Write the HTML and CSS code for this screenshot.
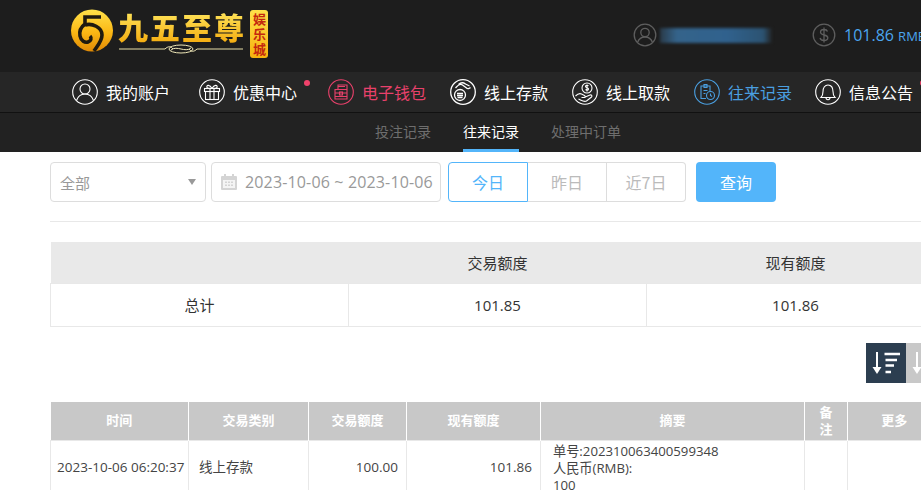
FILE: index.html
```html
<!DOCTYPE html>
<html lang="zh-CN">
<head>
<meta charset="utf-8">
<title>往来记录</title>
<link rel="stylesheet" href="styles.css">
</head>
<body>
<header class="top">
  <div class="logo">
    <svg class="logo-mark" width="44" height="44" viewBox="0 0 44 44">
      <defs>
        <linearGradient id="gold" x1="0" y1="0" x2="0" y2="1">
          <stop offset="0" stop-color="#ffe14a"/><stop offset=".55" stop-color="#fbb714"/><stop offset="1" stop-color="#e08a06"/>
        </linearGradient>
      </defs>
      <circle cx="22" cy="21.500" r="21" fill="url(#gold)"/>
      <path d="M31 8H15V15C11 18 9 22 10 27 11 32 15 34 18 33 21 32 22 29 20 27" fill="none" stroke="#1f1a10" stroke-width="3.600"/>
      <path d="M15 16C22 14 32 18 32 26 32 32 28 36 24 42" fill="none" stroke="#1f1a10" stroke-width="3.600"/>
    </svg>
    <div class="logo-words">
      <div class="logo-title">九五至尊</div>
      <svg class="logo-orn" width="124" height="10" viewBox="0 0 124 10">
        <path d="M0 5H46M78 5H124" stroke="#e8dfa8" stroke-width="1"/>
        <path d="M46 5c3-3 6-3 8 0M78 5c-3 3-6 3-8 0" stroke="#f0e8b8" fill="none"/>
        <ellipse cx="62" cy="5" rx="12" ry="4" fill="none" stroke="#f0e8b8"/>
        <path d="M52 6c6-5 14 3 20-2" stroke="#f0e8b8" fill="none"/>
      </svg>
    </div>
    <div class="logo-badge">娱乐城</div>
  </div>
  <div class="account">
    <svg class="acc-icon" width="24" height="24" viewBox="0 0 24 24" fill="none" stroke="#5e5e5e" stroke-width="1.300">
      <circle cx="12" cy="12" r="10.800"/><circle cx="12" cy="9.500" r="4.200"/><path d="M4.500 19.500c1.500-4 4-5.500 7.500-5.500s6 1.500 7.500 5.500"/>
    </svg>
    <div class="acc-name"></div>
    <svg class="acc-icon" width="24" height="24" viewBox="0 0 24 24" fill="none" stroke="#5e5e5e" stroke-width="1.300">
      <circle cx="12" cy="12" r="10.800"/><path d="M15.500 8.500c-.5-1.500-2-2-3.500-2-2 0-3.500 1-3.500 2.700 0 3.800 7.300 1.800 7.300 5.600 0 1.700-1.700 2.700-3.800 2.700-2 0-3.500-.8-4-2.500M12 4.500v15"/>
    </svg>
    <div class="balance">101.86 <small>RMB</small></div>
  </div>
</header>

<nav class="nav">
  <a class="nav-item nav-item-a">
    <svg class="nav-icon" viewBox="0 0 26 26"><circle cx="13" cy="13" r="12.300"/><circle cx="13" cy="10" r="5"/><path d="M4.500 21.500c1.500-4.500 4.500-6.500 8.500-6.500s7 2 8.500 6.500"/></svg>
    <span>我的账户</span>
  </a>
  <a class="nav-item nav-item-b">
    <svg class="nav-icon" viewBox="0 0 26 26"><circle cx="13" cy="13" r="12.300"/><rect x="5.500" y="9.500" width="15" height="3"/><rect x="6.500" y="12.500" width="13" height="8"/><path d="M11 9.500v11M15 9.500v11M13 9.500c-2-4-6-4-5-1 .3 1 3 1 5 1 2 0 4.700 0 5-1 1-3-3-3-5 1"/></svg>
    <span>优惠中心</span>
    <i class="dot"></i>
  </a>
  <a class="nav-item nav-item-pink">
    <svg class="nav-icon" viewBox="0 0 26 26"><circle cx="13" cy="13" r="12.300"/><path d="M10 10V6h9v14H7v-9.500h12"/><path d="M7 14h12M7 17.500h12M10 7.500h7"/><rect x="11.500" y="13" width="3" height="3"/></svg>
    <span>电子钱包</span>
  </a>
  <a class="nav-item">
    <svg class="nav-icon nav-icon-bold" viewBox="0 0 26 26"><circle cx="13" cy="13" r="12.300"/><circle cx="10" cy="16" r="5.500"/><path d="M7 14.500h6M7 16.500h6M7.500 18.500h5M5.500 9c3-3.500 5-4.500 7-3l4 3c1 1 3 .5 4-.5M8.500 5.500c2-2 5-2 7-.5l4 2"/></svg>
    <span>线上存款</span>
  </a>
  <a class="nav-item">
    <svg class="nav-icon" viewBox="0 0 26 26"><circle cx="13" cy="13" r="12.300"/><circle cx="15" cy="9" r="5"/><path d="M15 5.500v7M13.500 10.500c1 1 3 .8 3-.5s-3-1-3-2.500 2-1.500 3-.6M3.500 17c2-2 4-3 6-2l3 1.500c1 .5 1 2 0 2h-3M12 18.500l6-2.500c1.500-.5 2.500 1 1.500 2l-5 4c-2 1-4 0-6-1l-2-1"/></svg>
    <span>线上取款</span>
  </a>
  <a class="nav-item nav-item-blue">
    <svg class="nav-icon" viewBox="0 0 26 26"><circle cx="13" cy="13" r="12.300"/><path d="M12 19.500H7V7h9v5M10 5.500h3v3h-3zM9.500 11.500h4M9.500 14.500h2"/><circle cx="16.500" cy="16.500" r="4"/><path d="M16.500 14.500v2l1.500 1"/></svg>
    <span>往来记录</span>
  </a>
  <a class="nav-item">
    <svg class="nav-icon" viewBox="0 0 26 26"><circle cx="13" cy="13" r="12.300"/><path d="M6 18.500h14c-1.500-1.500-2-3-2-6 0-4-2-6.500-5-6.500s-5 2.500-5 6.500c0 3-.5 4.500-2 6z"/><path d="M11 18.500c0 3 4 3 4 0"/></svg>
    <span>信息公告</span>
    <i class="dot"></i>
  </a>
</nav>

<div class="subnav">
  <a class="sub-item">投注记录</a>
  <a class="sub-item sub-item-on">往来记录</a>
  <a class="sub-item">处理中订单</a>
</div>

<main class="content">
  <form class="filters">
    <div class="field field-select"><span>全部</span><i class="caret"></i></div>
    <div class="field field-date">
      <svg width="18" height="18" viewBox="0 0 18 18" fill="#d4d4d4">
        <rect x="1" y="3" width="16" height="14" rx="1"/><rect x="4" y="1" width="2" height="4"/><rect x="12" y="1" width="2" height="4"/>
        <path d="M3 7h12v8H3z" fill="#f4f4f4"/><path d="M5 8.500h2v1.500H5zM8 8.500h2v1.500H8zM11 8.500h2v1.500h-2zM5 11.500h2V13H5zM8 11.500h2V13H8zM11 11.500h2V13h-2z"/>
      </svg>
      <span>2023-10-06 ~ 2023-10-06</span>
    </div>
    <div class="ranges">
      <button type="button" class="range range-on">今日</button>
      <button type="button" class="range">昨日</button>
      <button type="button" class="range">近7日</button>
    </div>
    <button type="button" class="search">查询</button>
  </form>

  <table class="summary">
    <colgroup><col class="s-col"><col class="s-col"><col class="s-col"></colgroup>
    <thead><tr><th></th><th>交易额度</th><th>现有额度</th></tr></thead>
    <tbody><tr><td>总计</td><td>101.85</td><td>101.86</td></tr></tbody>
  </table>

  <div class="sorts">
    <button type="button" class="sort sort-on">
      <svg width="32" height="32" viewBox="0 0 32 32" fill="none" stroke="#fff"><path d="M7 5v16" stroke-width="2"/><path d="M2.500 20h9L7 27z" fill="#fff" stroke="none"/><path d="M14.500 7H30M15.500 13H27M15.500 18.500H24M15.500 25H21" stroke-width="2.400"/></svg>
    </button>
    <button type="button" class="sort">
      <svg width="32" height="32" viewBox="0 0 32 32" fill="none" stroke="#fff"><path d="M7 5v16" stroke-width="2"/><path d="M2.500 20h9L7 27z" fill="#fff" stroke="none"/></svg>
    </button>
  </div>

  <table class="records">
    <colgroup>
      <col class="c-time"><col class="c-type"><col class="c-amt"><col class="c-bal"><col class="c-memo"><col class="c-note"><col class="c-more">
    </colgroup>
    <thead>
      <tr><th>时间</th><th>交易类别</th><th>交易额度</th><th>现有额度</th><th>摘要</th><th>备注</th><th>更多</th></tr>
    </thead>
    <tbody>
      <tr>
        <td class="t-time">2023-10-06 06:20:37</td>
        <td class="t-type">线上存款</td>
        <td class="t-num">100.00</td>
        <td class="t-num">101.86</td>
        <td class="t-memo">单号:202310063400599348<br>人民币(RMB):<br>100</td>
        <td></td>
        <td></td>
      </tr>
    </tbody>
  </table>
</main>
</body>
</html>
```

FILE: styles.css
```css
* { box-sizing: border-box; }
html, body { margin: 0; height: 490px; overflow: hidden; background: #fff; }
body { width: 921px; font-family: "Open Sans", "Noto Sans CJK SC", sans-serif; color: #444; font-size: 14px; }

.top { height: 72px; background: #1d1d1d; display: flex; align-items: flex-start; justify-content: space-between; overflow: hidden; }
.logo { display: flex; margin-left: 70px; padding-top: 9px; }
.logo-mark { flex: none; }
.logo-words { margin-left: 4px; width: 128px; display: flex; flex-direction: column; }
.logo-title { font: 900 30px/34px "Noto Sans CJK SC", sans-serif; letter-spacing: 2px; white-space: nowrap; background: linear-gradient(#ffe860, #f3a90c); -webkit-background-clip: text; background-clip: text; color: transparent; height: 36px; }
.logo-orn { margin-top: -1px; margin-left: 1px; }
.logo-badge { margin: 1px 0 0 4px; width: 18px; height: 48px; border-radius: 3px; background: linear-gradient(#ffe04a, #f6b30e); color: #c4280e; font: 700 13px/18px "Noto Sans CJK SC", sans-serif; writing-mode: vertical-rl; letter-spacing: 2px; padding-top: 3px; }
.account { display: flex; align-items: center; padding-top: 23px; margin-left: auto; width: 288px; flex: none; }
.acc-icon { flex: none; }
.acc-name { width: 112px; height: 15px; margin: 0 40px 0 3px; background: linear-gradient(90deg, #2a3a48, #34638a 15%, #30618d 60%, #2c5372 92%, #222 100%); filter: blur(1.500px); flex: none; }
.balance { margin-left: 8px; color: #4ba5ef; font-size: 16px; white-space: nowrap; }
.balance small { font-size: 13px; }

.nav { height: 41px; background: #262626; border-bottom: 1px solid #111; display: flex; align-items: center; padding-left: 72px; gap: 24px; }
.nav-item { display: flex; align-items: center; gap: 8px; color: #fff; font-size: 16px; white-space: nowrap; position: relative; flex: none; }
.nav-icon { width: 26px; height: 26px; fill: none; stroke: currentColor; stroke-width: 1.100; flex: none; }
.nav-icon-bold { stroke-width: 1.300; }
.nav-item-a { margin-right: 5px; }
.nav-item-b { margin-right: 7px; }
.nav-item-pink { color: #e8416b; }
.nav-item-blue { color: #4a9fe0; margin-right: -1px; }
.dot { position: absolute; right: -13px; top: 1px; width: 6px; height: 6px; border-radius: 50%; background: #f0426b; }

.subnav { height: 39px; background: #222; display: flex; gap: 32px; padding-left: 375px; }
.sub-item { height: 39px; line-height: 38px; color: #6e6e6e; font-size: 14px; white-space: nowrap; }
.sub-item-on { color: #fff; border-bottom: 3px solid #53b5fa; }

.content { width: 896px; margin-left: 50px; }
.filters { display: flex; align-items: flex-start; width: 871px; height: 70px; padding-top: 10px; border-bottom: 1px solid #e8e8e8; }
.field { display: flex; align-items: center; height: 40px; border: 1px solid #ddd; border-radius: 4px; color: #999; font-size: 15px; }
.field-select { width: 156px; padding: 0 9px; justify-content: space-between; }
.caret { border: 4px solid transparent; border-top: 6px solid #999; border-bottom: 0; }
.field-date { width: 230px; margin-left: 5px; padding-left: 8px; gap: 7px; white-space: nowrap; font-size: 16px; letter-spacing: .15px; }
.ranges { display: flex; margin-left: 7px; }
.range { height: 40px; width: 79px; background: #fff; border: 1px solid #ddd; border-left: 0; color: #bbb; font: 16px "Noto Sans CJK SC", sans-serif; padding: 0; }
.range:last-child { border-radius: 0 4px 4px 0; }
.range-on { border: 1px solid #53b5fa; color: #53b5fa; border-radius: 4px 0 0 4px; width: 80px; }
.search { height: 40px; width: 80px; margin-left: 10px; border: 0; border-radius: 4px; background: #53b5fa; color: #fff; font: 16px "Noto Sans CJK SC", sans-serif; padding: 0; }

.summary { width: 895px; margin-top: 20px; border-collapse: collapse; table-layout: fixed; }
.s-col { width: 298px; }
.summary th { height: 41px; background: #e9e9e9; font-weight: 400; color: #333; font-size: 15px; padding: 0; }
.summary td { height: 43px; border: 1px solid #e8e8e8; text-align: center; color: #333; font-size: 15px; padding: 0; }

.sorts { display: flex; justify-content: flex-end; margin-top: 16px; }
.sort { width: 40px; height: 40px; border: 0; padding: 4px; background: #c8c8c8; display: flex; }
.sort-on { background: #2c3e50; }

.records { width: 890px; margin-top: 19px; border-collapse: collapse; table-layout: fixed; }
.c-time { width: 138px; } .c-type { width: 120px; } .c-amt { width: 98px; } .c-bal { width: 134px; }
.c-memo { width: 264px; } .c-note { width: 43px; } .c-more { width: 93px; }
.records th { height: 39px; background: #c8c8c8; color: #fff; font-size: 13px; font-weight: 700; border-left: 1px solid #fff; padding: 0 12px; line-height: 17px; }
.records th:first-child { border-left: 0; }
.records td { border: 1px solid #e8e8e8; height: 52px; padding: 0 6px; font-size: 13.500px; line-height: 17px; color: #444; vertical-align: middle; }
.t-time { white-space: nowrap; }
.t-type { padding-left: 10px !important; }
.t-num { text-align: right; padding-right: 8px !important; }
.t-memo { padding-left: 12px !important; padding-top: 2px !important; font-size: 13.200px !important; white-space: nowrap; }
```
